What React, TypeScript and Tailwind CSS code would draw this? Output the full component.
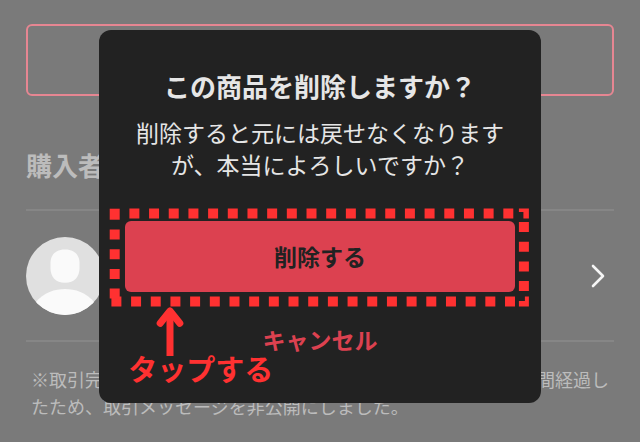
import { useState } from 'react'

function Avatar() {
  return (
    <svg viewBox="0 0 78 78" className="h-[78px] w-[78px] shrink-0" aria-hidden="true">
      <defs>
        <clipPath id="avatar-clip">
          <circle cx="39" cy="39" r="39" />
        </clipPath>
      </defs>
      <g clipPath="url(#avatar-clip)">
        <rect width="78" height="78" fill="#e0e0e0" />
        <path
          d="M39 12.5c9.500 0 14.500 5.500 14.500 13.500v5c0 9-5 14.700-14.500 14.700S24.500 40 24.500 31v-5c0-8 5-13.500 14.500-13.500z"
          fill="#fafafa"
        />
        <path d="M9 66C18 55 29 52 39 52s21 3 30 14v16H9z" fill="#fafafa" />
      </g>
    </svg>
  )
}

// Dotted frame drawn around the button that should be tapped
function TapFrame() {
  return (
    <svg
      viewBox="0 0 420 99"
      className="pointer-events-none absolute -top-[13px] -left-4 h-[99px] w-[calc(100%+30px)]"
      preserveAspectRatio="none"
      aria-hidden="true"
    >
      <g fill="none" stroke="#ff3131" strokeWidth="10">
        <path d="M20.4 5.4H406" strokeDasharray="10 9.7" />
        <path d="M2.4 93.5H406.5" strokeDasharray="10 9.7" />
        <path d="M5.7 21.5V92" strokeDasharray="10 9.7" />
        <path d="M415.3 14V85" strokeDasharray="10 9.7" />
      </g>
      <g fill="#ff3131">
        <path d="M.7.7h10v11H.7z" />
        <path d="M410.3.4h10v10h-5.5V4h-4.5z" />
        <path d="M410.3 98.5h10v-10h-4v4.5h-6z" />
      </g>
    </svg>
  )
}

function TapHint() {
  return (
    <div className="pointer-events-none absolute top-[276px] left-[29px] text-[#ff3131]">
      <svg viewBox="0 0 28 50" className="ml-7 h-[50px] w-7" aria-hidden="true">
        <g fill="none" stroke="currentColor" strokeWidth="7" strokeLinejoin="round">
          <path d="M14 50V5" />
          <path d="M4.2 17.3L14 5l9.800 12.300" strokeLinecap="round" />
        </g>
      </svg>
      <p className="-mt-1 text-[29px] leading-8 font-bold whitespace-nowrap">タップする</p>
    </div>
  )
}

function DeleteDialog({ onClose }: { onClose: () => void }) {
  return (
    <div className="absolute inset-0 flex items-start justify-center pt-[30px]">
      <div
        role="dialog"
        aria-modal="true"
        aria-labelledby="dialog-title"
        className="relative w-[69%] rounded-xl bg-[#222222] px-[26px] pt-[38px] pb-12 text-center text-[#e6e6e6]"
      >
        <h2 id="dialog-title" className="text-[26px] leading-9 font-bold whitespace-nowrap">
          この商品を削除しますか？
        </h2>
        <p className="mt-3 text-[23px] leading-8">
          削除すると元には戻せなくなります
          <br />
          が、本当によろしいですか？
        </p>

        <div className="relative mt-[41px]">
          <button
            type="button"
            onClick={onClose}
            className="block h-[71px] w-full rounded-md bg-[#dc4150] text-[23px] font-bold text-[#222222]"
          >
            削除する
          </button>
          <TapFrame />
        </div>

        <button
          type="button"
          onClick={onClose}
          className="mt-[31px] text-[23px] leading-8 font-bold text-[#dc4150]"
        >
          キャンセル
        </button>

        <TapHint />
      </div>
    </div>
  )
}

export default function App() {
  const [open, setOpen] = useState(true)

  return (
    <div
      lang="ja"
      className="relative min-h-screen bg-[#7a7a7a] px-[26px] pt-6 font-['Noto_Sans_CJK_JP',sans-serif]"
    >
      <button
        type="button"
        aria-label="商品を削除"
        onClick={() => setOpen(true)}
        className="block h-[72px] w-full rounded-md border-2 border-[#e68692]"
      />

      {/* Buyer */}
      <h1 className="mt-[51px] text-[26px] leading-9 font-bold text-[#bcbcbc]">購入者</h1>
      <a
        href="#buyer"
        aria-label="購入者"
        className="mt-[26px] flex h-[133px] items-center justify-between border-y-2 border-[#868686] pr-2"
      >
        <Avatar />
        <svg viewBox="0 0 18 26" className="h-[26px] w-[18px]" aria-hidden="true">
          <path
            d="M5 3l10 10L5 23"
            fill="none"
            stroke="#f5f5f5"
            strokeWidth="2.6"
            strokeLinecap="round"
            strokeLinejoin="round"
          />
        </svg>
      </a>

      {/* Notice */}
      <div className="mt-6 px-[5px] text-[18px] leading-[27px] text-[#bcbcbc]">
        <p className="flex justify-between">
          <span>※取引完</span>
          <span>間経過し</span>
        </p>
        <p>たため、取引メッセージを非公開にしました。</p>
      </div>

      {open && <DeleteDialog onClose={() => setOpen(false)} />}
    </div>
  )
}
